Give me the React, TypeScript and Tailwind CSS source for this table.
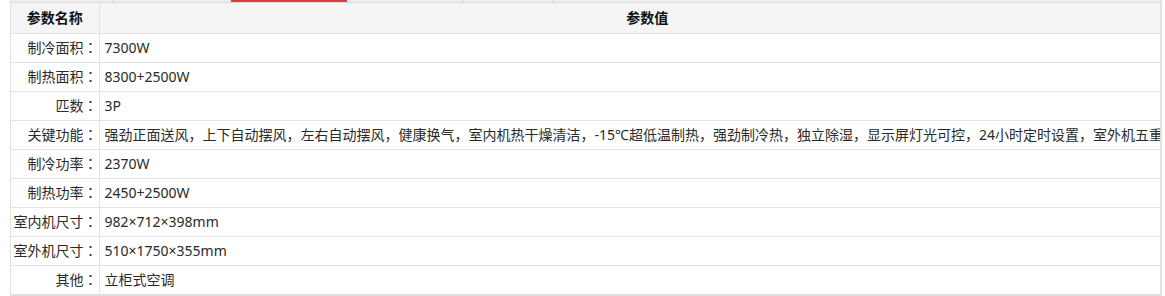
const rows: [string, string][] = [
  ['制冷面积', '7300W'],
  ['制热面积', '8300+2500W'],
  ['匹数', '3P'],
  [
    '关键功能',
    '强劲正面送风，上下自动摆风，左右自动摆风，健康换气，室内机热干燥清洁，-15℃超低温制热，强劲制冷热，独立除湿，显示屏灯光可控，24小时定时设置，室外机五重防护',
  ],
  ['制冷功率', '2370W'],
  ['制热功率', '2450+2500W'],
  ['室内机尺寸', '982×712×398mm'],
  ['室外机尺寸', '510×1750×355mm'],
  ['其他', '立柜式空调'],
];

export default function App() {
  return (
    <div
      className="w-[1165px] h-[296px] bg-white text-[14px] text-[#2a2a2a] overflow-hidden [text-spacing-trim:space-all]"
      style={{ fontFamily: '"Noto Sans", "Noto Sans CJK SC", sans-serif' }}
    >
      {/* tab strip bottom edge */}
      <div className="ml-[10px] w-[1152px] h-[3px] flex bg-[#ececec] border-b border-[#dcdcdc]">
        <div className="w-[103px] border-r border-[#d6d6d6]" />
        <div className="w-[118px]" />
        <div className="w-[116px] h-[2px] bg-[#e4393c]" />
        <div className="w-[117px] border-r border-[#d6d6d6]" />
        <div className="w-[89px] border-r border-[#d6d6d6]" />
      </div>

      {/* spec table */}
      <div className="ml-[10px] w-[1152px] overflow-hidden border-l border-r-2 border-b-2 border-[#e0e0e0]">
        <table className="w-[1184px] table-fixed border-collapse">
          <colgroup>
            <col className="w-[88px]" />
            <col />
          </colgroup>
          <thead>
            <tr className="h-[30px] bg-[#f5f5f5] border-b border-[#e3e3e3]">
              <th className="font-bold text-center text-[#111] border-r border-[#e3e3e3]">参数名称</th>
              <th className="font-bold text-center text-[#111]">参数值</th>
            </tr>
          </thead>
          <tbody>
            {rows.map(([label, value]) => (
              <tr key={label} className="h-[29px] border-b border-[#e3e3e3] last:border-b-0">
                <td className="border-r border-[#e3e3e3] text-right pr-[1px] whitespace-nowrap">
                  {label}
                  <span style={{ fontFamily: '"Noto Sans CJK TC", "Noto Sans CJK SC", sans-serif' }}>：</span>
                </td>
                <td className="pl-[5px] whitespace-nowrap overflow-hidden">{value}</td>
              </tr>
            ))}
          </tbody>
        </table>
      </div>
    </div>
  );
}
